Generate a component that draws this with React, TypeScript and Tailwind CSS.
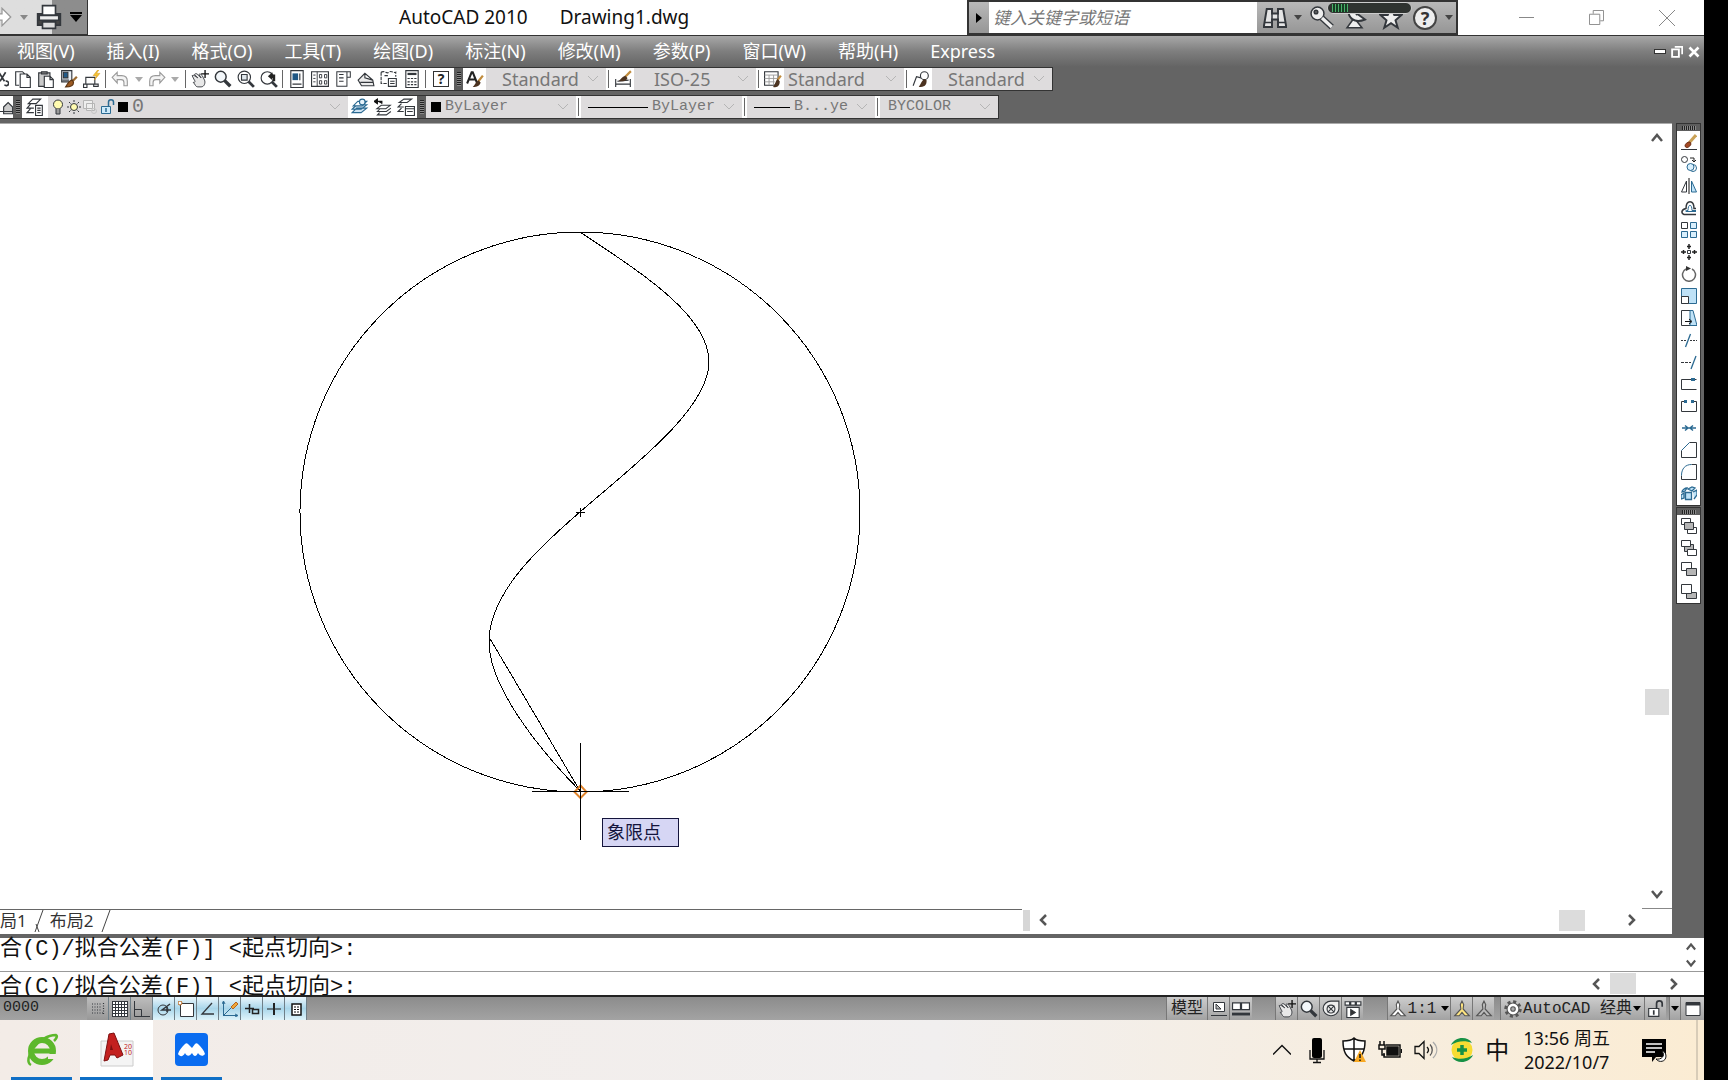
import type { ReactNode } from 'react';

const INK = '#33373c';
const BLUE = '#2b6a92';
const SKY = '#bfe2f7';

const Icon = ({ children, className = 'size-4' }: { children: ReactNode; className?: string }) => (
  <svg viewBox="0 0 16 16" fill="none" stroke={INK} strokeWidth="1" className={`${className} shrink-0`} aria-hidden="true">
    {children}
  </svg>
);

const icons: Record<string, ReactNode> = {
  cut: <path d="M7 2 12 10M13 2 8 10M6 10a2 2 0 1 0 1 3M13 10a2 2 0 1 1-1 3" strokeWidth="1.5" />,
  copy: <path d="M4.500 13.500h-3v-12h6l2 2M5.500 3.500h6l3 3v9h-9zM11.500 3.500v3h3" fill="#fff" />,
  paste: (
    <>
      <path d="M1.500 2.500h10v12h-10z" fill="#c9c9c9" />
      <path d="M4 1.500h5v2H4z" fill="#777" />
      <path d="M6.500 5.500h5l3 3v7h-8zM11.500 5.500v3h3" fill="#fff" />
    </>
  ),
  match: (
    <>
      <path d="M1.500.5h9v10h-9z" fill="#e8eef4" />
      <path d="M3 2h4v5H3z" fill="#235a87" />
      <path d="M2 9h6" />
      <path d="m15 6-4 4" stroke="#9a6b32" strokeWidth="2" />
      <path d="M11 9c-3 0-4 3-6 6 4 0 7-1 7-4z" fill="#9c5a22" stroke="#5b3514" />
    </>
  ),
  block: (
    <>
      <path d="M2.500 6.500h8v6h-8zM.5 12.500h3v3h-3zM9.500 12.500h4v2h-4z" />
      <path d="m13 0-4 5h3l-2 4 5-6h-3l2-3z" fill="#f7c531" stroke="#d2951d" strokeWidth=".5" />
    </>
  ),
  undo: <path d="M1 6.500 5.500 2v3h4c3 0 5 2 5 5v4h-3v-3c0-2-1-2.500-2.500-2.500H5.500v3z" stroke="#9a9a9a" fill="#f4f4f4" />,
  redo: <path d="M15 6.500 10.500 2v3h-4c-3 0-5 2-5 5v4h3v-3c0-2 1-2.500 2.500-2.500h3.500v3z" stroke="#9a9a9a" fill="#f4f4f4" />,
  pan: (
    <>
      <path d="M1 5c2-1 3 1 5 2L3 4c1-1 2-1 3 0l3 3-2-3c1-1 2 0 3 1l2 4c1 2 0 6-3 6H6c-2 0-2-2-4-4 2 0 2-1 1-2z" fill="#e8e8e8" strokeWidth=".8" />
      <path d="M12.500 0v7M9 3.500h7" stroke="#111" strokeWidth="1.200" />
    </>
  ),
  zoom: (
    <>
      <path d="m9 9 5.500 5.500" strokeWidth="3" />
      <circle cx="6" cy="6" r="4.800" fill="#f3f7fa" strokeWidth="1.300" />
    </>
  ),
  zoomWindow: (
    <>
      <path d="m10 10 5 5" strokeWidth="2.500" />
      <circle cx="6.500" cy="6.500" r="5.500" fill="#fff" />
      <path d="M4 4h5v5H4z" fill="#dfe7ec" />
    </>
  ),
  zoomPrev: (
    <>
      <path d="m10 10 5 5" strokeWidth="2.500" />
      <circle cx="6.500" cy="7" r="5.500" fill="#fff" />
      <path d="M7 5.500 11 2v2h2.500v6h-2V7H11v2z" fill="#222" stroke="none" />
    </>
  ),
  props: (
    <>
      <path d="M2.500.5h11v15h-11z" fill="#fff" />
      <path d="M4 3h5v6H4z" fill="#1f5784" stroke="none" />
      <path d="M10.500 3v6M4 12.500h8" />
    </>
  ),
  design: (
    <>
      <path d="M.5 1.500h15v13H.5z" fill="#fff" />
      <path d="M5.500 1.500v13M2 4.500h2M2 7.500h2M2 10.500h2" strokeWidth=".8" />
      <path d="M7.500 4h2v3h-2zM12 4h2v3h-2zM7.500 9.500h2v3h-2zM12 9.500h2v3h-2z" strokeWidth=".8" />
    </>
  ),
  palette: <path d="M2.500 1.500h9v13h-9zM11.500 1.500h3v5h-3M4.500 4h4M4.500 7h4M4.500 10h4" strokeWidth=".9" />,
  sheet: <path d="m1 9 6-6 7 6 1 5H4zM3 11h11M7 3v4l7 2" fill="#ececec" />,
  markup: (
    <>
      <path d="M1 2c3-2 5 2 7 0s4 1 6 0v4M1 2v10h5M4 5h3" strokeDasharray="3 1" />
      <path d="M7.500 7.500h7v7h-7zM9 10h4M9 12h4" />
    </>
  ),
  calc: (
    <>
      <path d="M2.500.5h11v15h-11z" fill="#fff" />
      <path d="M4 3.500h8" strokeWidth="2" />
      <path d="M4 7.500h2M7 7.500h2M10 7.500h2M4 10.500h2M7 10.500h2M10 10.500h2M4 13h2M7 13h2M10 13h2" />
    </>
  ),
  text: (
    <>
      <path d="M1 12 5 2h1l4 10M3 8.500h5" strokeWidth="1.800" stroke="#222" />
      <path d="m15 5-4 5" stroke="#c08b3c" strokeWidth="2" />
      <path d="M11 9c-2 1-3 4-5 6 4 0 6-1 7-4z" fill="#4c3320" stroke="none" />
    </>
  ),
  dim: (
    <>
      <path d="M1.500 8v7M14.500 8v7M2 12.500h12M3 10l10-1" />
      <path d="m15 1-5 5" stroke="#c08b3c" strokeWidth="2" />
      <path d="M10 5C7 6 6 8 4 10c4 0 7 0 8-3z" fill="#4c3320" stroke="none" />
    </>
  ),
  table: (
    <>
      <path d="M.5 1.500h12v9l-3 3h-9z" fill="#fff" />
      <path d="M.5 4.500h12M.5 7.500h12M.5 10.500h9M4.500 4.500v9M8.500 4.500v9" stroke="#9a9a9a" strokeWidth=".8" />
      <path d="m15 5-3 4" stroke="#c08b3c" strokeWidth="2" />
      <path d="M12 8c-2 2-2 5-4 7 4 1 6-1 6-5z" fill="#4c3320" stroke="none" />
    </>
  ),
  leader: (
    <>
      <path d="M1 14 4 6l4 1" />
      <circle cx="11" cy="5" r="3.500" fill="#fff" />
      <path d="M11 8c-2 1-3 4-5 7 5 0 7-1 7-6z" fill="#4c3320" stroke="none" />
    </>
  ),
  layers: <path d="m6 1-4 4h7l4-4zM4 5.500 1 9h6M4 9.500 1 13h6M8.500 6.500h6v9h-6zM10 9h3M10 11h3M10 13h3" fill="#fff" />,
  layerSet: (
    <>
      <path d="m5 9-4 4h8l5-4zM5 6 1 10h8l5-4z" fill="#cfe3f2" stroke={BLUE} />
      <path d="m6 3-4 4h8l4-4z" fill="#fff" stroke={BLUE} />
      <circle cx="10" cy="3.500" r="2.500" fill="#e8f4fc" stroke={BLUE} />
    </>
  ),
  layerPrev: (
    <>
      <path d="M6.500 6.500h8l-4 3h-8zM5 10l-2 2h8l4-3M5 13l-2 2h8l4-3" strokeWidth=".9" />
      <path d="M3 1v4L0 3zM3 3h4v2" fill="#111" stroke="#111" />
    </>
  ),
  layerState: <path d="m6 1-4 3h7l4-3zM4 5 1 8h5M4 9l-3 3h5M7.500 7.500h8v8h-8zM7.500 9.500h8M9 12h5" fill="#fff" />,
  plotter: <path d="m5 8 4-4 4 4v6H5zM1 1v14M1 12h14" fill="#ccc" />,
  bulb: (
    <>
      <circle cx="8" cy="5.500" r="4.500" fill="#fffbb0" />
      <path d="M6 10v5h4v-5" fill="#999" />
    </>
  ),
  sun: (
    <>
      <circle cx="8" cy="8" r="3.500" fill="#fffbb0" />
      <path d="M8 1v2M8 13v2M1 8h2M13 8h2M3 3l1.500 1.500M11.500 11.500 13 13M13 3l-1.500 1.500M4.500 11.500 3 13" />
    </>
  ),
  viewport: (
    <>
      <path d="M1.500 1.500h9v8h-9zM4.500 4.500h8v7h-8z" stroke="#b5b5b5" fill="#eee" />
      <circle cx="12" cy="12" r="2.500" stroke="#c4c4c4" />
    </>
  ),
  lock: (
    <>
      <path d="M1.500 7.500h9v7h-9z" fill="#cdeafa" stroke={BLUE} />
      <path d="M8.500 7V3c0-3 5-3 5 0v3" stroke={BLUE} strokeWidth="1.500" />
      <path d="M6 9v4" stroke={BLUE} strokeWidth="1.500" />
    </>
  ),
};

const modifyTools: [string, ReactNode][] = [
  ['删除', <><path d="M0 15.500h16" /><path d="m15 1-7 8" stroke="#caa257" strokeWidth="3" /><path d="M9 8c-3 0-5 2-5 4 1 3 5 1 6-2z" fill="#a34a25" stroke="#6c2d15" /></>],
  ['复制', <><circle cx="3.500" cy="3.500" r="3" /><path d="M9 2h4v4M11 4l2 2 2-2" stroke="#222" /><circle cx="12" cy="12" r="3.500" stroke={BLUE} /><circle cx="9.500" cy="11" r="3.500" fill="#d9effc" stroke={BLUE} /></>],
  ['镜像', <><path d="M5.500 3v11h-5z" /><path d="M8 0v16" stroke="#111" /><path d="M10.500 3v11h5z" fill={SKY} stroke={BLUE} /></>],
  ['偏移', <><path d="M15 14.500H3c-3-1-3-5 2-6 0-9 8-9 8 0h2" strokeWidth="1.500" /><path d="M15 11.500H5c-1-1 0-1 2-1 0-7 4-7 4 0h4" stroke={BLUE} /></>],
  ['阵列', <><path d="M.5.5h6v6h-6z" /><path d="M9.500.5h6v6h-6zM.5 9.500h6v6h-6zM9.500 9.500h6v6h-6z" fill="#d9effc" stroke={BLUE} /></>],
  ['移动', <><path d="M6.500 6.500h3v3h-3z" /><path d="M8 0v5M8 11v5M0 8h5M11 8h5M6 2.500h4M6 13.500h4M2.500 6v4M13.500 6v4" stroke="#222" strokeWidth="1.500" /></>],
  ['旋转', <><path d="M5 3a6.500 6.500 0 1 0 6 0" stroke="#666" strokeWidth="1.500" /><path d="m5 0 5 2.500L5 5z" fill="#333" stroke="none" /></>],
  ['缩放', <><path d="M.5.5h15v15H.5z" fill={SKY} stroke={BLUE} /><path d="M.5 8.500h7v7h-7z" fill="#fff" /></>],
  ['拉伸', <><path d="M11 .5H.5v15H11" /><path d="M9 .5h3l4 15H9z" fill={SKY} stroke={BLUE} /><path d="M4 11.500h6M8 9l3 2.500L8 14" stroke="#111" /></>],
  ['修剪', <><path d="M0 8.500h5M9 8.500h7" strokeDasharray="2 1" /><path d="M9.500 2 4.500 15" stroke={BLUE} strokeWidth="1.300" /></>],
  ['延伸', <><path d="M0 8.500h10" strokeDasharray="3 1" /><path d="m15 2-5 13" stroke={BLUE} strokeWidth="1.300" /></>],
  ['打断于点', <><path d="M15.500 3.500H.5v10h15" /><path d="M10 2h4v3h-4z" fill={BLUE} stroke="none" /></>],
  ['打断', <><path d="M3 3.500H.5v10h15v-10H13" /><path d="M3 2h3v3H3zM10 2h3v3h-3z" fill={BLUE} stroke="none" /></>],
  ['合并', <path d="M1 8h14M4 5.500 7 8l-3 2.500M12 5.500 9 8l3 2.500" stroke={BLUE} strokeWidth="1.500" />],
  ['倒角', <><path d="M8.500.5h7v15H.5v-7" /><path d="m.5 8.500 8-8" stroke={BLUE} /></>],
  ['圆角', <><path d="M10.500.5h5v15H.5v-4" /><path d="M.5 11.500c0-7 4-11 10-11" stroke={BLUE} /></>],
  ['分解', <path d="M4.500 6.500h6v7h-6zM1 6c0-2 3-4 5-4L4 5zM7 3l4-2 3 1-3 3zM12 6l4-2v5l-3 4M3 7 0 9v4l3-1z" fill={SKY} stroke={BLUE} strokeWidth="1.300" />],
];

const orderTools: [string, ReactNode][] = [
  ['前置', <><path d="M.5.5h9v6h-9zM6.500 9.500h9v6h-9z" fill="#fff" /><path d="M3.500 4.500h9v7h-9z" fill="#b5b5b5" /></>],
  ['后置', <><path d="M3.500 4.500h9v7h-9z" fill="#b5b5b5" /><path d="M.5.5h9v6h-9zM6.500 9.500h9v6h-9z" fill="#fff" /></>],
  ['置于对象之上', <><path d="M.5.5h10v8H.5z" fill="#fff" /><path d="M5.500 6.500h10v7h-10z" fill="#b5b5b5" /></>],
  ['置于对象之下', <><path d="M5.500 8.500h10v6h-10z" fill="#b5b5b5" /><path d="M.5.5h10v9H.5z" fill="#fff" /></>],
];

const menus = ['视图(V)', '插入(I)', '格式(O)', '工具(T)', '绘图(D)', '标注(N)', '修改(M)', '参数(P)', '窗口(W)', '帮助(H)', 'Express'];

const Tool = ({ name, label, className = 'w-[23px]' }: { name: string; label: string; className?: string }) => (
  <button aria-label={label} className={`${className} flex h-full shrink-0 items-center justify-center bg-white`}>
    <Icon className="size-[18px]">{icons[name]}</Icon>
  </button>
);

const Caret = ({ className = '' }: { className?: string }) => (
  <svg viewBox="0 0 8 5" className={`h-[5px] w-2 shrink-0 ${className}`} aria-hidden="true">
    <path d="M0 0h8L4 5z" fill="currentColor" />
  </svg>
);

const Chevron = ({ d, className = 'size-3' }: { d: string; className?: string }) => (
  <svg viewBox="0 0 12 12" fill="none" stroke="#555" strokeWidth="2.500" className={`shrink-0 ${className}`} aria-hidden="true">
    <path d={d} />
  </svg>
);
const UP = 'M1 9l5-6 5 6';
const DOWN = 'M1 3l5 6 5-6';
const LEFT = 'M8 1 3 6l5 5';
const RIGHT = 'M4 1l5 5-5 5';

const Grip = () => (
  <div className="flex w-[9px] shrink-0 items-center justify-center bg-[#5d5d5d]">
    <div className="h-[14px] w-[4px] bg-[repeating-linear-gradient(#222_0_1px,#888_1px_2px)]" />
  </div>
);

const Rule = () => <div className="mx-[2px] my-[2px] w-px shrink-0 bg-[#666]" />;

const Combo = ({ label, value, className, children, font = "font-['Noto_Sans','Noto_Sans_CJK_SC',sans-serif] text-[18px]" }: {
  label: string; value: string; className: string; children?: ReactNode; font?: string;
}) => (
  <div className={`${className} flex shrink-0 items-center bg-[#dedcdd] pr-2`}>
    {children}
    <select aria-label={label} className={`${font} h-full min-w-0 flex-1 appearance-none overflow-hidden leading-5 text-[#777]`}>
      <option>{value}</option>
    </select>
    <svg viewBox="0 0 10 6" fill="none" stroke="#b5b5b5" className="ml-1 h-[6px] w-[10px] shrink-0" aria-hidden="true">
      <path d="m0 0 5 5 5-5" />
    </svg>
  </div>
);

const mono = "font-['Liberation_Mono','Noto_Sans_CJK_SC',monospace]";

const TitleBar = () => (
  <header className="flex h-9 items-stretch border-b border-[#333] bg-white">
    <div className="flex w-[88px] shrink-0 items-center overflow-hidden border-r border-b border-[#333] bg-linear-to-r from-[#dedede] from-60% to-[#8d8d8d] to-60%">
      <button aria-label="重做" className="-ml-2 w-5 shrink-0">
        <Icon className="size-5"><path d="M1 5.500h7V1l7 7-7 7v-4.500H1z" fill="#fff" stroke="#999" /></Icon>
      </button>
      <Caret className="ml-2 text-[#888]" />
      <button aria-label="打印" className="ml-2">
        <Icon className="size-[26px]">
          <path d="M1 6h14v7H1z" fill="#444" />
          <path d="M4 1h8v6H4z" fill="#fff" />
          <path d="M2 7h12v3H2z" fill="#eee" />
          <path d="M4 11h8v4H4z" fill="#ddd" />
        </Icon>
      </button>
      <button aria-label="自定义快速访问工具栏" className="ml-2 flex flex-col items-center gap-px">
        <span className="h-[2px] w-3 bg-black" />
        <svg viewBox="0 0 12 7" className="h-[7px] w-3"><path d="M0 0h12L6 7z" /></svg>
      </button>
    </div>
    <h1 className="flex flex-1 items-center gap-8 pl-[311px] text-[19px] whitespace-nowrap text-[#111]">
      <span>AutoCAD 2010</span>
      <span>Drawing1.dwg</span>
    </h1>
    <div className="relative flex w-[491px] shrink-0 items-center border-x-2 border-y-2 border-[#333] bg-linear-to-b from-[#b9b9b9] to-[#969696]">
      <button aria-label="收拢" className="flex w-5 shrink-0 justify-center">
        <svg viewBox="0 0 6 10" className="h-[10px] w-[6px]"><path d="M0 0v10l6-5z" /></svg>
      </button>
      <input aria-label="搜索" placeholder="键入关键字或短语" className="h-full w-[268px] shrink-0 bg-white px-1 text-[17px] italic outline-none placeholder:text-[#777]" />
      <button aria-label="搜索帮助" className="ml-[6px]">
        <Icon className="size-6">
          <path d="M2.500 2h3.500v3h4V2h3.500l2 12h-5.500V9h-4v5H.5z" fill="#e5e5e5" strokeWidth="1.300" />
          <path d="M1 11h5M10 11h5M6 5v4M10 5v4" />
        </Icon>
      </button>
      <Caret className="ml-[7px] text-[#444]" />
      <button aria-label="速博应用中心" className="ml-2">
        <Icon className="size-6">
          <path d="M8 8 14.500 14" strokeWidth="4" />
          <circle cx="5" cy="5" r="4.300" fill="#eee" />
          <path d="M8 8 14.500 14" stroke="#eee" strokeWidth="2.200" />
          <circle cx="4" cy="4" r="1.200" fill="#666" />
        </Icon>
      </button>
      <button aria-label="通讯中心" className="ml-[10px]">
        <Icon className="size-6">
          <path d="M6 9 2 14.500h10L8 9.500z" fill="#eee" />
          <path d="M3 1c-1 7 4 11 11 8zM13 1 8 6" fill="#eee" strokeWidth="1.300" />
        </Icon>
      </button>
      <button aria-label="收藏夹" className="ml-[11px]">
        <Icon className="size-6"><path d="m8 1 2.200 5H15l-4 3.500 1.500 5L8 11.500l-4.500 3L5 9.500 1 6h4.800z" fill="#eee" strokeWidth="1.300" /></Icon>
      </button>
      <button aria-label="帮助" className="ml-[10px] flex size-6 items-center justify-center rounded-full border-2 border-[#444] bg-[#eee] text-[18px] leading-5 font-bold text-[#333]">?</button>
      <Caret className="ml-2 text-[#444]" />
      <div className="absolute top-0 left-[358px] flex h-3 w-[85px] items-center rounded-md border border-[#ccc] bg-[#2f3330] pl-1">
        <span className="h-2 w-4 bg-[repeating-linear-gradient(90deg,#49b06a_0_1px,#173d24_1px_3px)]" />
      </div>
    </div>
    <div className="flex w-[246px] shrink-0 items-center justify-between pr-[29px] pl-[61px]">
      <button aria-label="最小化" className="h-px w-[15px] bg-[#888]" />
      <button aria-label="还原"><Icon className="size-[15px]"><path d="M.5 4.500h11v11H.5zM4.500 4V.5h11v11H12" stroke="#888" /></Icon></button>
      <button aria-label="关闭"><Icon className="size-4"><path d="m0 0 16 16M16 0 0 16" stroke="#888" /></Icon></button>
    </div>
  </header>
);

const MenuBar = () => (
  <nav className="flex h-[31px] items-center gap-8 bg-linear-to-b from-[#a8a8a8] via-[#7e7e7e] to-[#646464] pl-[17px] text-[18px] text-white">
    {menus.map((m) => (
      <button key={m} className="shrink-0 whitespace-nowrap">{m}</button>
    ))}
    <div className="mr-[4px] ml-auto flex items-center gap-[5px]">
      <button aria-label="最小化图形" className="h-[5px] w-3 border border-[#333] bg-white" />
      <button aria-label="还原图形"><Icon className="size-3"><path d="M5 1h10v10M1.500 4.500h9v10h-9z" stroke="#fff" strokeWidth="2.500" /></Icon></button>
      <button aria-label="关闭图形"><Icon className="size-3"><path d="m2 2 12 12M14 2 2 14" stroke="#fff" strokeWidth="3.500" /></Icon></button>
    </div>
  </nav>
);

const Toolbars = () => (
  <div className="flex flex-col items-start gap-1 bg-[#646464] pb-1">
    <div className="flex h-6 border border-l-0 border-[#333] bg-white">
      <Tool name="cut" label="剪切" className="-ml-3 w-[23px]" />
      <Tool name="copy" label="复制" />
      <Tool name="paste" label="粘贴" />
      <Tool name="match" label="特性匹配" />
      <Tool name="block" label="块编辑器" />
      <Rule />
      <Tool name="undo" label="放弃" />
      <Caret className="mx-1 self-center text-[#aaa]" />
      <Tool name="redo" label="重做" className="w-5" />
      <Caret className="mx-1 self-center text-[#aaa]" />
      <Rule />
      <Tool name="pan" label="实时平移" />
      <Tool name="zoom" label="实时缩放" />
      <Tool name="zoomWindow" label="窗口缩放" />
      <Tool name="zoomPrev" label="缩放上一个" />
      <Rule />
      <Tool name="props" label="特性" />
      <Tool name="design" label="设计中心" />
      <Tool name="palette" label="工具选项板" />
      <Tool name="sheet" label="图纸集管理器" />
      <Tool name="markup" label="标记集管理器" />
      <Tool name="calc" label="快速计算器" />
      <Rule />
      <button aria-label="帮助主题" className="mx-[5px] my-[3px] w-4 border border-[#333] text-[14px] leading-[14px] font-bold text-[#222]">?</button>
      <Grip />
      <Tool name="text" label="文字样式" />
      <Combo label="文字样式控制" value="Standard" className="w-[120px] pl-4" />
      <Rule />
      <Tool name="dim" label="标注样式" />
      <Combo label="标注样式控制" value="ISO-25" className="w-[122px] pl-5" />
      <Rule />
      <Tool name="table" label="表格样式" />
      <Combo label="表格样式控制" value="Standard" className="w-[120px] pl-1" />
      <Rule />
      <Tool name="leader" label="多重引线样式" />
      <Combo label="多重引线样式控制" value="Standard" className="w-[120px] pl-4" />
    </div>
    <div className="flex h-6 border border-l-0 border-[#333] bg-white">
      <Tool name="plotter" label="工作空间" className="w-[13px] overflow-hidden" />
      <Grip />
      <Tool name="layers" label="图层特性管理器" className="w-[26px]" />
      <Combo label="图层控制" value="0" className="w-[300px] pl-[2px]" font={`${mono} text-[20px]`}>
        <Icon className="size-4">{icons.bulb}</Icon>
        <Icon className="size-4">{icons.sun}</Icon>
        <Icon className="mr-[2px] size-4">{icons.viewport}</Icon>
        <Icon className="size-4">{icons.lock}</Icon>
        <span className="mr-1 ml-[2px] size-[10px] bg-black" />
      </Combo>
      <Tool name="layerSet" label="将对象的图层置为当前" />
      <Tool name="layerPrev" label="上一个图层" />
      <Tool name="layerState" label="图层状态管理器" />
      <Grip />
      <Combo label="颜色控制" value="ByLayer" className="w-[150px] pl-[5px]" font={`${mono} text-[15px]`}>
        <span className="mr-1 size-[10px] bg-black" />
      </Combo>
      <Rule />
      <Combo label="线型控制" value="ByLayer" className="w-[161px] pl-[7px]" font={`${mono} text-[15px]`}>
        <span className="mr-1 h-px w-[60px] bg-black" />
      </Combo>
      <Rule />
      <Combo label="线宽控制" value="B...ye" className="w-[128px] pl-[7px]" font={`${mono} text-[15px]`}>
        <span className="mr-1 h-px w-9 bg-black" />
      </Combo>
      <Rule />
      <Combo label="打印样式控制" value="BYCOLOR" className="w-[118px] pl-2" font={`${mono} text-[15px]`} />
    </div>
  </div>
);

const Drawing = () => (
  <main className="relative min-h-[780px] flex-1 overflow-hidden bg-white">
    <svg className="absolute inset-0 size-full" fill="none" stroke="#000" shapeRendering="crispEdges" aria-label="图形">
      <g transform="translate(0 -124)">
        <circle cx="580" cy="512" r="280" />
        <path d="M580 232C640 272 709 315 709 362C709 410 628 470 580 512C537 549 489 594 489 642C489 685 535 745 580 791" />
        <path d="M489 637 580 791" />
        <path d="M576 512.500h9M580.500 508v9" />
        <path d="m580.500 785.500 6 6.500-6 6-6-6z" stroke="#e0832b" strokeWidth="2" shapeRendering="auto" />
        <path d="M532 791.500h97M580.500 743v97" />
      </g>
    </svg>
    <div role="tooltip" className="absolute top-[694px] left-[602px] h-[29px] w-[77px] border border-[#14143c] bg-[#d6d6f4] pl-1 text-[18px] leading-[27px] text-[#14143c]">
      象限点
    </div>
  </main>
);

const LayoutTabs = () => (
  <div className="flex h-[25px] shrink-0 items-stretch bg-white text-[17px] text-[#333]">
    <div className="flex flex-1 items-start overflow-hidden border-t border-[#666]">
      <button className="h-[22px] shrink-0 leading-[22px] whitespace-nowrap">局1</button>
      <svg viewBox="0 0 10 24" className="ml-[7px] h-6 w-[10px] shrink-0" stroke="#444" fill="none"><path d="M1 22 9 0M2 14l3 8" /></svg>
      <button className="ml-[6px] h-[22px] shrink-0 leading-[22px] whitespace-nowrap">布局2</button>
      <svg viewBox="0 0 10 24" className="ml-[8px] h-6 w-[10px] shrink-0" stroke="#444"><path d="M1 22 9 0" /></svg>
    </div>
    <div className="mt-px mb-[3px] ml-px w-[7px] bg-[#d6d6d6]" />
    <div className="flex w-[642px] shrink-0 items-center pb-[3px] pl-[8px]">
      <Chevron d={LEFT} />
      <div className="ml-auto h-[21px] w-[26px] bg-[#dcdcdc]" />
      <Chevron d={RIGHT} className="mr-[35px] ml-[40px] size-3" />
    </div>
  </div>
);

const VerticalScroll = () => (
  <div className="flex w-[30px] shrink-0 flex-col items-center border-b border-[#888] bg-white py-[8px]">
    <Chevron d={UP} />
    <div className="min-h-0 flex-[547]" />
    <div className="h-[26px] w-6 bg-[#dcdcdc]" />
    <div className="min-h-0 flex-[173]" />
    <Chevron d={DOWN} />
  </div>
);

const SideGroup = ({ tools }: { tools: [string, ReactNode][] }) => (
  <div className="border border-[#333] bg-white">
    <div className="flex h-[7px] items-center justify-center bg-[#5d5d5d]">
      <div className="h-1 w-[14px] bg-[repeating-linear-gradient(90deg,#222_0_1px,#888_1px_2px)]" />
    </div>
    {tools.map(([label, art]) => (
      <button key={label} aria-label={label} className="flex h-[22px] w-full items-center justify-center">
        <Icon>{art}</Icon>
      </button>
    ))}
  </div>
);

const CommandLine = () => (
  <section className={`${mono} border-t-4 border-[#646464] bg-white text-[22px] text-[#111]`}>
    <div className="flex h-[34px] justify-between border-b border-[#999] pr-2">
      <p className="leading-6 whitespace-pre">合(C)/拟合公差(F)] &lt;起点切向&gt;:</p>
      <div className="flex flex-col justify-center gap-[6px]">
        <Chevron d={UP} className="size-[10px]" />
        <Chevron d={DOWN} className="size-[10px]" />
      </div>
    </div>
    <div className="flex h-[25px] items-center border-b-2 border-[#222]">
      <input aria-label="命令" defaultValue="合(C)/拟合公差(F)] <起点切向>:" className="h-full min-w-0 flex-1 leading-6 outline-none" />
      <Chevron d={LEFT} />
      <div className="ml-[7px] h-[21px] w-[26px] bg-[#dcdcdc]" />
      <Chevron d={RIGHT} className="mr-[25px] ml-[31px] size-3" />
    </div>
  </section>
);

const toggles: [string, boolean, ReactNode][] = [
  ['捕捉', false, <path d="M2 3h9M2 6h9M2 9h9M2 12h12M13.500 2v11" strokeDasharray="1 1.500" strokeWidth="1.200" />],
  ['栅格', false, <><path d="M0 .5h16v15H0z" fill="#fff" /><path d="M.5 0v16M3.500 0v16M6.500 0v16M9.500 0v16M12.500 0v16M15.500 0v16M0 .5h16M0 3.500h16M0 6.500h16M0 9.500h16M0 12.500h16M0 15.500h16" /></>],
  ['正交', false, <path d="M.5 0v15.500H16M.5 8.500h7v7" />],
  ['极轴', true, <><circle cx="7" cy="9" r="5" /><path d="M14 3 6 9h9M11 6v5" strokeWidth="1.500" /></>],
  ['对象捕捉', true, <><path d="M2.500 2.500h13v13h-13z" fill="#fff" /><circle cx="2" cy="2" r="2" stroke="#b5651d" fill="#fff" /></>],
  ['对象追踪', true, <path d="M12 2 2 13h12" strokeWidth="1.300" />],
  ['动态 UCS', true, <><path d="M1.500 15V1M1 14.500h14M2 14l8-8M0 3l1.500-3L3 3M13 13l3 1.500-3 1.500" stroke={BLUE} /><path d="m9 6 5-5 2 2-5 5z" fill="#f0a73a" stroke="#b5651d" /></>],
  ['动态输入', true, <path d="M1 7.500h9M5.500 3v9M8.500 8.500h6v4h-6z" strokeWidth="1.500" stroke="#222" />],
  ['线宽', true, <><path d="M1 8h14" stroke="#222" /><path d="M8 2v12" strokeWidth="2" stroke="#222" /></>],
  ['快捷特性', true, <><path d="M4 3h9v11H4z" fill="#fff" stroke="#111" strokeWidth="1.500" /><path d="M6 6h2M9 6h2M6 8.500h2M9 8.500h2M6 11h2M9 11h2" stroke="#111" /></>],
];

const SButton = ({ label, className = 'w-[22px]', children }: { label: string; className?: string; children: ReactNode }) => (
  <button aria-label={label} className={`${className} flex h-full shrink-0 items-center justify-center gap-px border-l border-[#777] bg-linear-to-b from-[#cdcdcd] to-[#a2a2a2] whitespace-nowrap`}>
    {children}
  </button>
);

const Person = ({ color = '#fff' }: { color?: string }) => (
  <Icon className="size-[18px]"><path d="M8 1 6.500 4l.5 4-5.500 6h4L8 11l2.500 3h4L9 8l.5-4z" fill={color} stroke="#555" /></Icon>
);

const StatusBar = () => (
  <footer className={`${mono} flex h-[23px] items-center bg-linear-to-b from-[#8c8c8c] to-[#a3a3a3] text-[16px] text-[#222]`}>
    <span className="w-[87px] shrink-0 pl-[3px] text-[15px]">0000</span>
    {toggles.map(([label, on, art]) => (
      <button
        key={label}
        aria-label={label}
        aria-pressed={on}
        className={`flex h-full w-[22px] shrink-0 items-center justify-center border-r border-[#6f7f88] bg-linear-to-b ${on ? 'from-[#eaf6fc] via-[#a9d6ea] to-[#dff4fb]' : 'from-[#bdbdbd] to-[#989898]'}`}
      >
        <Icon>{art}</Icon>
      </button>
    ))}
    <SButton label="模型" className="ml-auto w-[41px]">模型</SButton>
    <SButton label="快速查看布局"><Icon><path d="M2.500 1.500h11v9h-11zM0 14.500h16M5 3v5h5z" fill="#fff" /></Icon></SButton>
    <SButton label="快速查看图形" className="mr-[23px] w-[23px]"><Icon className="size-[18px]"><path d="M.5 2.500h7v6h-7zM8.500 2.500h7v6h-7z" fill="#fff" /><path d="M0 12.500h16" strokeWidth="2.500" /></Icon></SButton>
    <SButton label="平移"><Icon className="size-[18px]">{icons.pan}</Icon></SButton>
    <SButton label="缩放"><Icon className="size-[18px]">{icons.zoom}</Icon></SButton>
    <SButton label="控制盘"><Icon className="size-[18px]"><path d="M15 1v7a7 6.500 0 1 1-7-7z" fill="#eee" /><circle cx="8" cy="8" r="3.500" /><path d="m5 5 6 6M11 5l-6 6" /></Icon></SButton>
    <SButton label="运动显示器" className="mr-[24px] w-[22px]"><Icon className="size-[18px]"><path d="M1 1.500h4v3H1zM6 1.500h4v3H6zM11 1.500h4v3h-4zM2.500 6.500h11v9h-11z" fill="#fff" /><path d="M6 8.500v5l4-2.500z" fill="#333" /></Icon></SButton>
    <SButton label="注释比例" className="w-[63px]"><Person />1:1<Caret className="ml-1 text-black" /></SButton>
    <SButton label="注释可见性"><Person color="#ffe680" /></SButton>
    <SButton label="自动缩放" className="mr-[6px] w-[22px]"><Person color="#bbb" /></SButton>
    <SButton label="切换工作空间" className="w-[144px]">
      <Icon className="size-[18px]">
        <circle cx="8" cy="8" r="6" stroke="#555" strokeWidth="3.500" strokeDasharray="2.500 2.200" />
        <circle cx="8" cy="8" r="5.300" fill="#fff" stroke="#555" />
        <circle cx="8" cy="8" r="2" fill="#aaa" stroke="#555" />
      </Icon>
      AutoCAD 经典
      <Caret className="text-black" />
    </SButton>
    <SButton label="锁定"><Icon className="size-[18px]"><path d="M1.500 7.500h9v7h-9z" fill="#fff" /><path d="M8.500 7V3c0-3 5-3 5 0v3M6 9v4" strokeWidth="1.500" /></Icon></SButton>
    <SButton label="状态栏菜单" className="ml-[3px] w-[11px]"><Caret className="text-black" /></SButton>
    <SButton label="全屏显示" className="w-6"><Icon><path d="M1 1.500h14v13H1z" fill="#fff" /><path d="M1 3h14" strokeWidth="3" /></Icon></SButton>
  </footer>
);

const TaskBar = () => (
  <div className="flex h-[60px] items-stretch bg-linear-to-r from-[#f3ece7] via-[#f1efef] via-55% to-[#fbecd3] text-[#111]">
    <button aria-label="浏览器" className="mr-2 ml-[11px] flex w-[61px] justify-center border-b-3 border-[#0f6fc6] pt-3">
      <svg viewBox="0 0 36 36" className="size-9" fill="none" aria-hidden="true">
        <circle cx="18" cy="19" r="11" stroke="#5db82c" strokeWidth="6" />
        <path d="M9 19h19" stroke="#5db82c" strokeWidth="5" />
        <path d="M24 22h8v5h-8z" fill="#f3ece7" />
        <path d="M7 33C-2 28 14 3 32 3c2 1 0 4-2 6" stroke="#5db82c" strokeWidth="2.500" />
      </svg>
    </button>
    <button aria-label="AutoCAD 2010" className="mr-2 flex w-[73px] justify-center border-b-3 border-[#0f6fc6] bg-white pt-3">
      <svg viewBox="0 0 36 36" className="size-9" aria-hidden="true">
        <path d="M2 9h32v25H2z" fill="#f4f4f4" stroke="#ccc" />
        <path d="m10 2 5-1 9 22-6 3-2-3h-5l-2 5-4 1z" fill="#c3201f" stroke="#7d0f10" />
        <path d="m12 12 2 6h-3z" fill="#7d0f10" />
        <text x="25" y="17" fontSize="7" fill="#c3201f">20</text>
        <text x="25" y="23" fontSize="7" fill="#c3201f">10</text>
      </svg>
    </button>
    <button aria-label="腾讯会议" className="flex w-[61px] justify-center border-b-3 border-[#0f6fc6] pt-[13px]">
      <svg viewBox="0 0 33 33" className="size-[33px]" aria-hidden="true">
        <rect width="33" height="33" rx="4" fill="#0a6cf0" />
        <path d="M3 21c1-4 4-7 7-10 1-1 2-1 3 0l4 4 3-4c1-1 2-1 3 0 3 3 6 6 7 10-2 3-5 2-7-1-2 4-4 4-6 0-2 3-5 4-7 0-2 4-5 4-7 1z" fill="#fff" />
      </svg>
    </button>
    <div className="mr-[6px] ml-auto flex items-center border-r-2 border-[#d8ccb8] pr-[29px]">
      <button aria-label="显示隐藏的图标"><Icon className="size-[18px]"><path d="m0 12 8-8 8 8" stroke="#111" strokeWidth="1.300" /></Icon></button>
      <button aria-label="麦克风" className="ml-[18px]">
        <svg viewBox="0 0 16 34" className="h-[34px] w-4"><rect x="3" y="5" width="10" height="20" rx="2" /><path d="M1 17v9h14v-9M8 26v3M4 29.500h8" fill="none" stroke="#111" strokeWidth="1.300" /></svg>
      </button>
      <button aria-label="安全中心" className="ml-[17px]">
        <svg viewBox="0 0 24 26" className="h-[26px] w-6" fill="#fff" stroke="#111" strokeWidth="1.500"><path d="M12 1c3 3 7 3 11 3 0 11-3 16-11 20C4 20 1 15 1 4c4 0 8 0 11-3zM12 1v23M2 12h20" /><path d="m18 13 6 12H12z" fill="#f7a823" stroke="none" /><path d="M18 17v4M18 22.500v1.500" /></svg>
      </button>
      <button aria-label="电源" className="ml-[12px]">
        <svg viewBox="0 0 24 18" className="h-[18px] w-6" fill="none" stroke="#111" strokeWidth="1.500"><path d="M8 4h14v12H6v-4M2 0v4M6 0v4M1 4h6v4H1zM4 8v6h3" /><path d="M9 6h11v8H9z" fill="#111" /><path d="M23.500 8v4" /></svg>
      </button>
      <button aria-label="音量" className="ml-[12px]">
        <svg viewBox="0 0 24 22" className="h-[22px] w-6" fill="none" stroke="#111" strokeWidth="1.300"><path d="M1 7.500h4l5-5v17l-5-5H1zM13 8c2 2 2 4 0 6" /><path d="M16 5.500c3 3 3 8 0 11" stroke="#555" /><path d="M19 3c5 5 5 11 0 16" stroke="#aaa" /></svg>
      </button>
      <button aria-label="安全卫士" className="ml-[12px]">
        <svg viewBox="0 0 24 26" className="h-[26px] w-6"><circle cx="12" cy="13" r="10.500" fill="#f6dc33" /><path d="M1 8C5-1 18-1 22 6 15 3 7 4 1 8zM23 18c-4 9-17 9-21 2 7 3 15 2 21-2z" fill="#179145" /><path d="M12 8v10M7 13h10" stroke="#179145" strokeWidth="3.500" /></svg>
      </button>
      <button className="ml-[11px] text-[24px] leading-6">中</button>
      <time className="ml-[14px] flex flex-col items-center text-[18px] leading-6 whitespace-nowrap">
        <span>13:56 周五</span>
        <span>2022/10/7</span>
      </time>
      <button aria-label="通知" className="ml-[31px]">
        <svg viewBox="0 0 26 26" className="size-[26px]"><path d="M1 2h24v18H15l-4 5v-5H1z" /><path d="M5 7h16M5 11h16M5 15h9" stroke="#fff" strokeWidth="1.500" /><path d="M21 14c4 5-1 9-6 8 3 4 10 3 10-3 0-3-2-5-4-5z" fill="#fff" stroke="#111" /></svg>
      </button>
    </div>
  </div>
);

export default function App() {
  return (
    <div className="min-h-screen bg-black pr-6 font-['Noto_Sans','Noto_Sans_CJK_SC',sans-serif]">
      <div className="flex min-h-screen flex-col overflow-hidden bg-[#646464]">
        <TitleBar />
        <MenuBar />
        <Toolbars />
        <div className="flex min-h-0 flex-1">
          <div className="flex min-w-0 flex-1 flex-col border-t border-[#aaa]">
            <div className="flex flex-1">
              <Drawing />
              <VerticalScroll />
            </div>
            <LayoutTabs />
          </div>
          <aside className="mr-[3px] ml-1 flex w-[25px] shrink-0 flex-col gap-px">
            <SideGroup tools={modifyTools} />
            <SideGroup tools={orderTools} />
          </aside>
        </div>
        <CommandLine />
        <StatusBar />
        <TaskBar />
      </div>
    </div>
  );
}
